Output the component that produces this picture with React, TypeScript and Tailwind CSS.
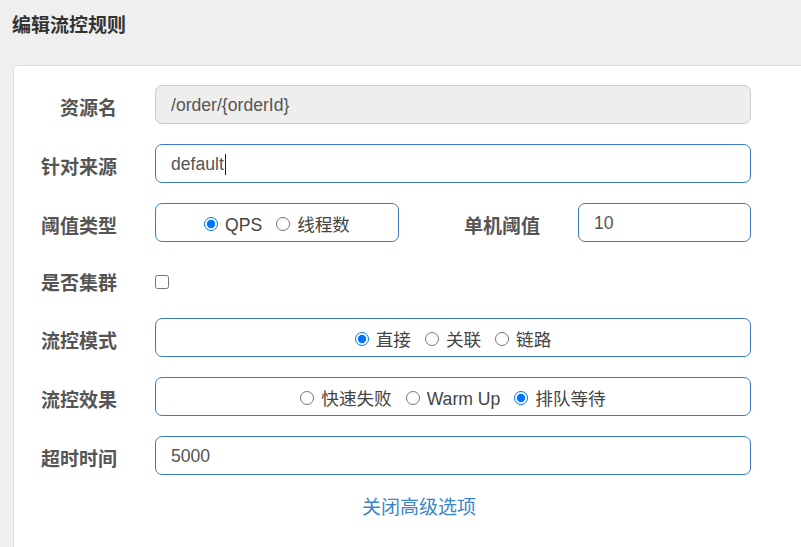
const font = { fontFamily: '"Liberation Sans", "Noto Sans CJK SC", sans-serif' };

function Label({ children }: { children: string }) {
  return (
    <div className="w-[103px] shrink-0 text-right text-[19px] font-bold text-[#555] leading-none pt-[7px]">
      {children}
    </div>
  );
}

function Radio({ label, checked, name }: { label: string; checked?: boolean; name: string }) {
  return (
    <label className="flex items-center">
      <input type="radio" name={name} defaultChecked={checked} className="m-0 w-[14px] h-[14px] -mt-[1px]" />
      <span className="ml-[7px] text-[17.6px] text-[#444] leading-none pt-[3px]">{label}</span>
    </label>
  );
}

function RadioGroup({ name, items, checked, className }: { name: string; items: string[]; checked: number; className?: string }) {
  return (
    <div
      className={
        'h-[39px] rounded-[7px] border border-[#3b7bbd] flex items-center justify-center gap-[14px] pt-[3px] ' +
        (className ?? '')
      }
    >
      {items.map((it, i) => (
        <Radio key={it} name={name} label={it} checked={i === checked} />
      ))}
    </div>
  );
}

export default function App() {
  return (
    <div className="w-[801px] h-[547px] overflow-hidden bg-[#efefef]" style={font}>
      <h3 className="pl-[12px] pt-[16px] h-[65px] text-[19px] font-bold text-[#333] leading-[20px]">编辑流控规则</h3>
      <div className="ml-[13px] w-[830px] h-[500px] bg-white border border-[#dcdcdc] rounded-tl-[4px] pt-[19px]">
        <div className="flex flex-col gap-[20px]">
          <div className="flex items-center h-[39px]">
            <Label>资源名</Label>
            <div className="ml-[38px] w-[596px] h-[39px] rounded-[7px] border border-[#cccccc] bg-[#eeeeee] flex items-center pl-[15px] pt-[1px] text-[17.6px] text-[#555]">
              /order/{'{orderId}'}
            </div>
          </div>

          <div className="flex items-center h-[39px]">
            <Label>针对来源</Label>
            <div className="ml-[38px] w-[596px] h-[39px] rounded-[7px] border border-[#3b7bbd] flex items-center pl-[15px] pt-[1px] text-[17.6px] text-[#555]">
              default
              <span className="inline-block w-[1px] h-[21px] bg-[#222] ml-[1px]" />
            </div>
          </div>

          <div className="flex items-center h-[39px]">
            <Label>阈值类型</Label>
            <div className="ml-[38px] w-[596px] flex items-center">
              <RadioGroup name="grade" items={['QPS', '线程数']} checked={0} className="w-[244px]" />
              <div className="flex-1 text-right text-[19px] font-bold text-[#555] leading-none pt-[7px]">单机阈值</div>
              <div className="ml-[38px] w-[173px] h-[39px] rounded-[7px] border border-[#3b7bbd] flex items-center pl-[15px] pt-[1px] text-[17.6px] text-[#555]">
                10
              </div>
            </div>
          </div>

          <div className="flex items-center h-[36px]">
            <Label>是否集群</Label>
            <div className="ml-[38px] flex items-center pt-[4px]">
              <input type="checkbox" className="m-0 w-[14px] h-[14px]" />
            </div>
          </div>

          <div className="flex items-center h-[39px]">
            <Label>流控模式</Label>
            <RadioGroup name="strategy" items={['直接', '关联', '链路']} checked={0} className="ml-[38px] w-[596px]" />
          </div>

          <div className="flex items-center h-[39px]">
            <Label>流控效果</Label>
            <RadioGroup
              name="behavior"
              items={['快速失败', 'Warm Up', '排队等待']}
              checked={2}
              className="ml-[38px] w-[596px]"
            />
          </div>

          <div className="flex items-center h-[39px]">
            <Label>超时时间</Label>
            <div className="ml-[38px] w-[596px] h-[39px] rounded-[7px] border border-[#3b7bbd] flex items-center pl-[15px] pt-[1px] text-[17.6px] text-[#555]">
              5000
            </div>
          </div>
        </div>

        <div className="w-[810px] text-center mt-[22px]">
          <a className="text-[19px] text-[#3a86c8] leading-none cursor-pointer">关闭高级选项</a>
        </div>
      </div>
    </div>
  );
}
